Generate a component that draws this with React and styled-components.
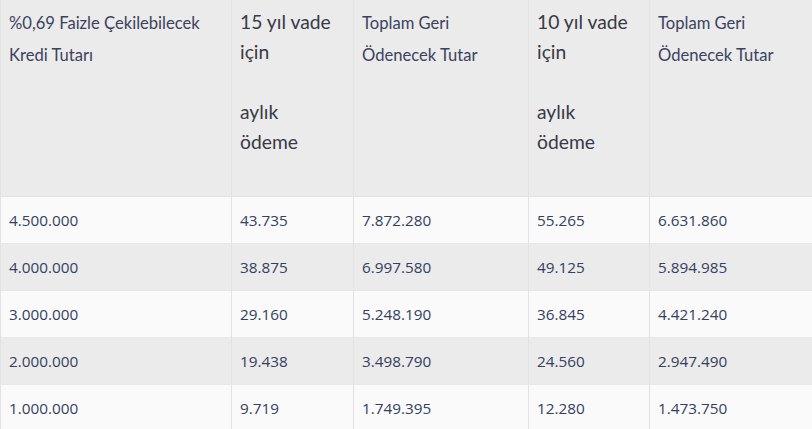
import React from "react";
import styled, { createGlobalStyle } from "styled-components";

const GlobalStyle = createGlobalStyle`
  html, body {
    margin: 0;
    padding: 0;
    background: #ffffff;
    overflow: hidden;
  }
`;

const headers = [
  { lines: ["%0,69 Faizle Çekilebilecek", "Kredi Tutarı"], big: false },
  { lines: ["15 yıl vade", "için", "", "aylık", "ödeme"], big: true },
  { lines: ["Toplam Geri", "Ödenecek Tutar"], big: false },
  { lines: ["10 yıl vade", "için", "", "aylık", "ödeme"], big: true },
  { lines: ["Toplam Geri", "Ödenecek Tutar"], big: false },
];

const rows = [
  ["4.500.000", "43.735", "7.872.280", "55.265", "6.631.860"],
  ["4.000.000", "38.875", "6.997.580", "49.125", "5.894.985"],
  ["3.000.000", "29.160", "5.248.190", "36.845", "4.421.240"],
  ["2.000.000", "19.438", "3.498.790", "24.560", "2.947.490"],
  ["1.000.000", "9.719", "1.749.395", "12.280", "1.473.750"],
];

const colWidths = [231, 122, 175, 121, 180];

const App = () => {
  return (
    <>
      <GlobalStyle />
      <Table>
        <colgroup>
          {colWidths.map((w, i) => (
            <col key={i} style={{ width: w }} />
          ))}
        </colgroup>
        <thead>
          <HeadRow>
            {headers.map((h, i) => (
              <HeadCell key={i} $big={h.big}>
                {h.lines.map((line, j) => (
                  <HeadLine key={j}>{line || "\u00a0"}</HeadLine>
                ))}
              </HeadCell>
            ))}
          </HeadRow>
        </thead>
        <tbody>
          {rows.map((row, i) => (
            <BodyRow key={i} $odd={i % 2 === 1}>
              {row.map((val, j) => (
                <Cell key={j}>{val}</Cell>
              ))}
            </BodyRow>
          ))}
        </tbody>
      </Table>
    </>
  );
};

export default App;

const Table = styled.table`
  width: 829px;
  table-layout: fixed;
  border-collapse: collapse;
  color: #333a4f;
`;

const HeadRow = styled.tr`
  height: 196px;
  background: #ebebeb;
`;

const HeadCell = styled.th`
  vertical-align: top;
  text-align: left;
  font-weight: 400;
  padding: 7px 8px 0;
  border: 1px solid #e2e2e2;
  border-top: none;
  font-family: Lato, "Liberation Sans", sans-serif;
  font-size: ${(p) => (p.$big ? "19.3px" : "16.6px")};
  line-height: ${(p) => (p.$big ? "30px" : "32px")};
  color: ${(p) => (p.$big ? "#383a44" : "#3b4260")};
`;

const HeadLine = styled.div`
  white-space: nowrap;
`;

const BodyRow = styled.tr`
  height: 47px;
  background: ${(p) => (p.$odd ? "#ebebeb" : "#fafafa")};
`;

const Cell = styled.td`
  padding: 0 8px;
  vertical-align: middle;
  border: 1px solid #e2e2e2;
  border-top: 1px solid #e8e8e8;
  border-bottom: none;
  font-family: "Open Sans", "DejaVu Sans", sans-serif;
  font-size: 15.3px;
  color: #34405e;
`;
